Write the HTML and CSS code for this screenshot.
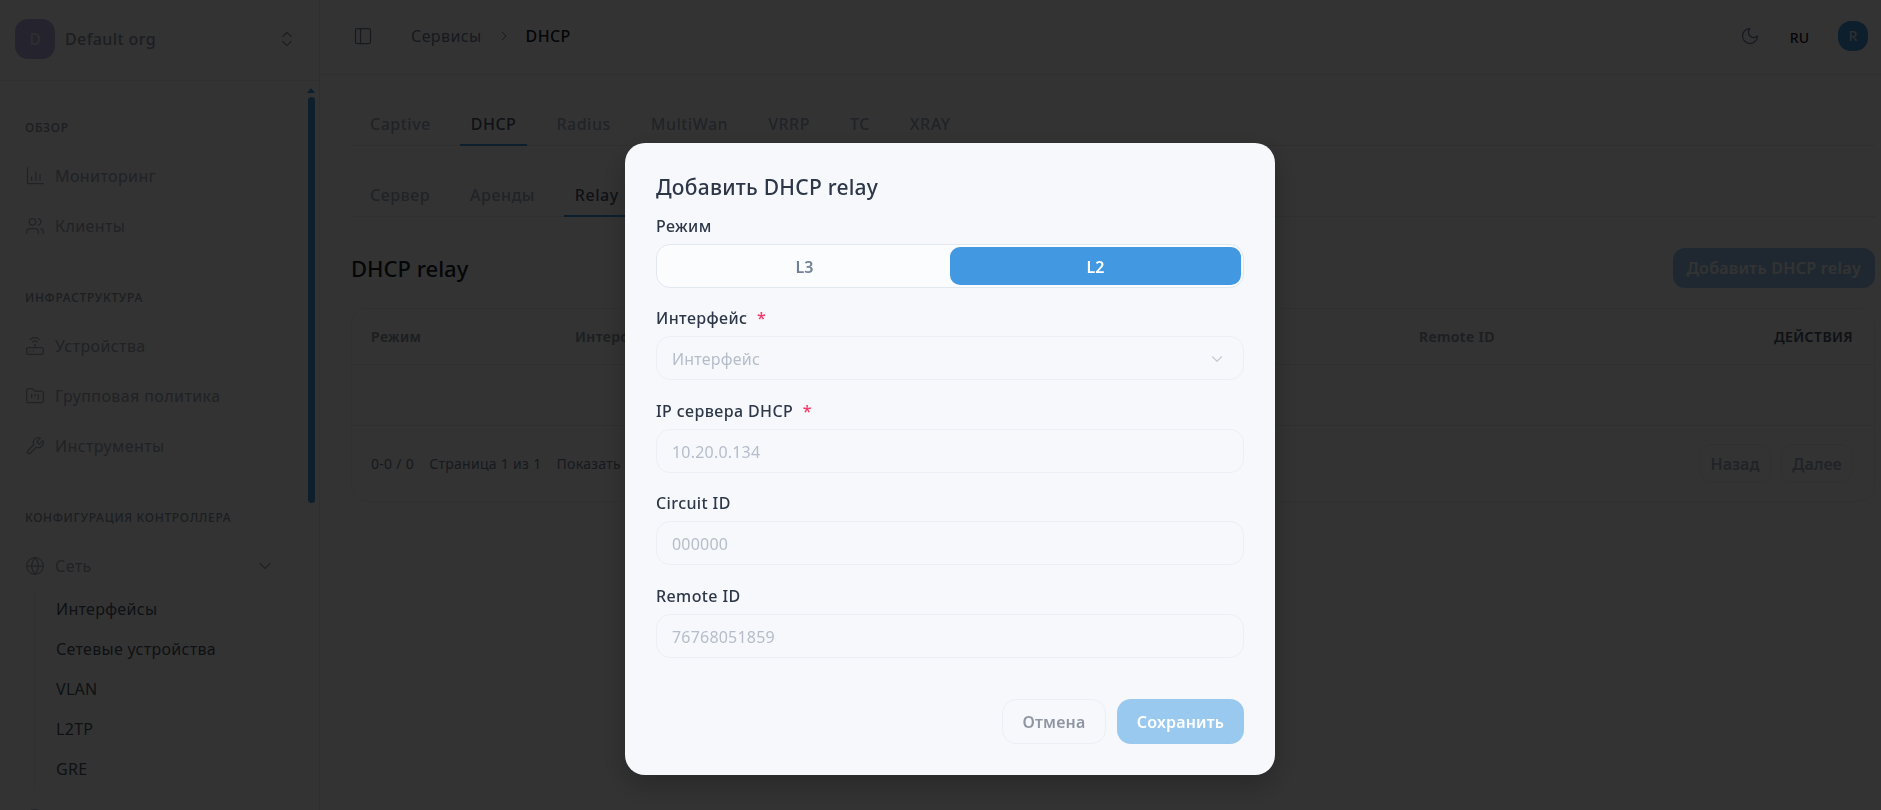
FILE: index.html
```html
<!DOCTYPE html>
<html lang="ru">
<head>
    <meta charset="UTF-8">
    <meta name="viewport" content="width=device-width, initial-scale=1.0">
    <title>DHCP</title>
    <link rel="stylesheet" href="styles.css">
</head>
<body>
    <div class="app">
        <aside class="sidebar">
            <div class="org">
                <div class="org-avatar">D</div>
                <span class="org-name">Default org</span>
                <svg class="icon org-switch" viewBox="0 0 24 24"><path d="m7 15 5 5 5-5"/><path d="m7 9 5-5 5 5"/></svg>
            </div>
            <nav class="nav">
                <div class="nav-label">Обзор</div>
                <a class="nav-item">
                    <svg class="icon" viewBox="0 0 24 24"><path d="M3 2v19h19"/><path d="M8 17v-4"/><path d="M13 17V7"/><path d="M18 17v-7"/></svg>
                    Мониторинг
                </a>
                <a class="nav-item">
                    <svg class="icon" viewBox="0 0 24 24"><path d="M16 21v-2a4 4 0 0 0-4-4H6a4 4 0 0 0-4 4v2"/><circle cx="9" cy="7" r="4"/><path d="M22 21v-2a4 4 0 0 0-3-3.87"/><path d="M16 3.13a4 4 0 0 1 0 7.75"/></svg>
                    Клиенты
                </a>

                <div class="nav-label">Инфраструктура</div>
                <a class="nav-item">
                    <svg class="icon" viewBox="0 0 24 24"><rect x="2" y="14" width="20" height="8" rx="2"/><path d="M6.01 18H6"/><path d="M10.01 18H10"/><path d="M12 14v-4"/><path d="M9.2 7.2a4 4 0 0 1 5.6 0"/><path d="M6.3 4.3a8 8 0 0 1 11.4 0"/></svg>
                    Устройства
                </a>
                <a class="nav-item">
                    <svg class="icon" viewBox="0 0 24 24"><path d="M20 20a2 2 0 0 0 2-2V8a2 2 0 0 0-2-2h-7.9a2 2 0 0 1-1.69-.9L9.6 3.9A2 2 0 0 0 7.93 3H4a2 2 0 0 0-2 2v13a2 2 0 0 0 2 2Z"/><path d="M8 10v4"/><path d="M12 10v2"/><path d="M16 10v6"/></svg>
                    Групповая политика
                </a>
                <a class="nav-item">
                    <svg class="icon" viewBox="0 0 24 24"><path d="M14.7 6.3a1 1 0 0 0 0 1.4l1.6 1.6a1 1 0 0 0 1.4 0l3.77-3.77a6 6 0 0 1-7.94 7.94l-6.91 6.91a2.12 2.12 0 0 1-3-3l6.91-6.91a6 6 0 0 1 7.94-7.94l-3.76 3.76z"/></svg>
                    Инструменты
                </a>

                <div class="nav-label">Конфигурация контроллера</div>
                <a class="nav-item">
                    <svg class="icon" viewBox="0 0 24 24"><circle cx="12" cy="12" r="10"/><path d="M2 12h20"/><path d="M12 2a15.3 15.3 0 0 1 4 10 15.3 15.3 0 0 1-4 10 15.3 15.3 0 0 1-4-10 15.3 15.3 0 0 1 4-10z"/></svg>
                    Сеть
                    <svg class="icon nav-caret" viewBox="0 0 24 24"><path d="m6 9 6 6 6-6"/></svg>
                </a>
                <div class="subnav">
                    <a class="subnav-item">Интерфейсы</a>
                    <a class="subnav-item">Сетевые устройства</a>
                    <a class="subnav-item">VLAN</a>
                    <a class="subnav-item">L2TP</a>
                    <a class="subnav-item">GRE</a>
                </div>
                <a class="nav-item">
                    <svg class="icon" viewBox="0 0 24 24"><circle cx="12" cy="12" r="10"/></svg>
                    Сервисы
                </a>
            </nav>
            <div class="scroll-arrow"></div>
            <div class="scroll-thumb"></div>
        </aside>

        <main class="main">
            <header class="topbar">
                <svg class="icon panel-icon" viewBox="0 0 24 24"><rect x="3" y="3" width="18" height="18" rx="2"/><path d="M9 3v18"/></svg>
                <span class="crumb">Сервисы</span>
                <svg class="icon crumb-sep" viewBox="0 0 24 24"><path d="m9 18 6-6-6-6"/></svg>
                <span class="crumb-current">DHCP</span>
                <div class="topbar-right">
                    <svg class="icon moon" viewBox="0 0 24 24"><path d="M12 3a6 6 0 0 0 9 9 9 9 0 1 1-9-9Z"/></svg>
                    <span class="lang">RU</span>
                    <div class="user-avatar">R</div>
                </div>
            </header>

            <div class="content">
                <div class="tabs tabs-top">
                    <span class="tab">Captive</span>
                    <span class="tab active">DHCP</span>
                    <span class="tab">Radius</span>
                    <span class="tab">MultiWan</span>
                    <span class="tab">VRRP</span>
                    <span class="tab">TC</span>
                    <span class="tab">XRAY</span>
                </div>
                <div class="tabs tabs-sub">
                    <span class="tab">Сервер</span>
                    <span class="tab">Аренды</span>
                    <span class="tab active">Relay</span>
                </div>

                <div class="page-head">
                    <h1>DHCP relay</h1>
                    <button class="add-btn">Добавить DHCP relay</button>
                </div>

                <div class="card">
                    <div class="table-row table-head">
                        <span>Режим</span>
                        <span>Интерфейс</span>
                        <span>IP сервера DHCP</span>
                        <span>Circuit ID</span>
                        <span>Remote ID</span>
                        <span class="actions-col">ДЕЙСТВИЯ</span>
                    </div>
                    <div class="table-empty"></div>
                    <div class="table-foot">
                        <span>0-0 / 0</span>
                        <span>Страница 1 из 1</span>
                        <span>Показать строк: 10</span>
                        <div class="pager">
                            <button class="pager-btn">Назад</button>
                            <button class="pager-btn">Далее</button>
                        </div>
                    </div>
                </div>
            </div>
        </main>
    </div>

    <!-- Modal sits on top of everything, page behind is dimmed -->
    <div class="overlay">
        <div class="modal">
            <h2>Добавить DHCP relay</h2>
            <div class="field-label first-label">Режим</div>
            <div class="segment">
                <span class="segment-item">L3</span>
                <span class="segment-item selected">L2</span>
            </div>
            <div class="fields">
                <div>
                    <label class="field-label">Интерфейс <span class="req">*</span></label>
                    <div class="input select">
                        Интерфейс
                        <svg class="icon" viewBox="0 0 24 24"><path d="m6 9 6 6 6-6"/></svg>
                    </div>
                </div>
                <div>
                    <label class="field-label">IP сервера DHCP <span class="req">*</span></label>
                    <input class="input" placeholder="10.20.0.134">
                </div>
                <div>
                    <label class="field-label">Circuit ID</label>
                    <input class="input" placeholder="000000">
                </div>
                <div>
                    <label class="field-label">Remote ID</label>
                    <input class="input" placeholder="76768051859">
                </div>
            </div>
            <div class="modal-foot">
                <button class="btn btn-cancel">Отмена</button>
                <button class="btn btn-save">Сохранить</button>
            </div>
        </div>
    </div>
</body>
</html>
```

FILE: styles.css
```css
* {
    box-sizing: border-box;
}

body {
    margin: 0;
    height: 100vh;
    overflow: hidden;
    background: #fff;
    color: #2d3748;
    font-family: "Noto Sans", sans-serif;
    font-size: 16px;
}

.icon {
    width: 20px;
    height: 20px;
    flex: none;
    fill: none;
    stroke: currentColor;
    stroke-width: 1.5;
    stroke-linecap: round;
    stroke-linejoin: round;
}

.app {
    display: flex;
    height: 100vh;
}

/* sidebar */
.sidebar {
    position: relative;
    width: 320px;
    flex: none;
    overflow: hidden;
    border-right: 1px solid #e8ebf0;
}

.org {
    display: flex;
    align-items: center;
    height: 81px;
    padding: 0 22px 2px 15px;
    border-bottom: 1px solid #e8ebf0;
}

.org-avatar {
    display: flex;
    justify-content: center;
    align-items: center;
    width: 40px;
    height: 40px;
    border-radius: 13px;
    background: #b4aee6;
    color: #e2e2ee;
    font-weight: 600;
}

.org-name {
    margin-left: 10px;
    color: #8a94a6;
    font-weight: 500;
    letter-spacing: .4px;
}

.org-switch {
    margin-left: auto;
    color: #8a94a6;
}

.nav {
    padding-top: 36px;
}

.nav-label {
    height: 20px;
    margin: 36px 0 14px 25px;
    color: #8a94a6;
    font-size: 12px;
    font-weight: 500;
    line-height: 22px;
    letter-spacing: .7px;
    text-transform: uppercase;
}

.nav-label:first-child {
    margin-top: 0;
}

.nav-item {
    display: flex;
    align-items: center;
    gap: 10px;
    height: 50px;
    padding: 0 25px;
    color: #a0a8b8;
    letter-spacing: .4px;
}

.nav-caret {
    margin-left: auto;
    margin-right: 19px;
}

.subnav {
    margin: -2px 0 4px 34px;
    padding-left: 21px;
    border-left: 1px solid #eef0f4;
}

.subnav-item {
    display: block;
    height: 40px;
    line-height: 40px;
    color: #4a5568;
    letter-spacing: .3px;
}

.scroll-arrow {
    position: absolute;
    top: 88px;
    left: 307px;
    border: 4px solid transparent;
    border-top: 0;
    border-bottom: 5px solid #4299e1;
}

.scroll-thumb {
    position: absolute;
    top: 97px;
    left: 308px;
    width: 7px;
    height: 406px;
    border-radius: 4px;
    background: #4299e1;
}

/* top bar */
.main {
    flex: 1;
    min-width: 0;
}

.topbar {
    display: flex;
    align-items: center;
    height: 75px;
    padding: 0 13px 3px 33px;
    border-bottom: 1px solid #e8ebf0;
}

.panel-icon {
    color: #718096;
}

.crumb {
    margin-left: 38px;
    color: #718096;
    letter-spacing: .4px;
}

.crumb-sep {
    width: 16px;
    height: 16px;
    margin: 0 14px;
    color: #718096;
}

.crumb-current {
    font-weight: 500;
    color: #1a202c;
    letter-spacing: .4px;
}

.topbar-right {
    display: flex;
    align-items: center;
    margin-left: auto;
}

.moon {
    color: #718096;
}

.lang {
    margin: 3px 29px 0 30px;
    font-size: 14px;
    font-weight: 500;
    color: #1a202c;
}

.user-avatar {
    display: flex;
    justify-content: center;
    align-items: center;
    width: 30px;
    height: 30px;
    border-radius: 13px;
    background: #4299e1;
    color: #e2e8f0;
    font-size: 14px;
    font-weight: 500;
}

/* content */
.content {
    padding: 0 6px 0 31px;
}

.tabs {
    display: flex;
    gap: 18px;
    height: 71px;
    padding: 29px 0 0 8px;
    border-bottom: 1px solid #e8ebf0;
}

.tab {
    height: 42px;
    padding: 9px 11px 0;
    border-bottom: 2px solid transparent;
    color: #a0aec0;
    font-weight: 500;
    line-height: 22px;
    letter-spacing: .5px;
}

.tab.active {
    border-bottom-color: #4299e1;
    color: #4a5568;
}

.page-head {
    display: flex;
    justify-content: space-between;
    align-items: center;
    margin-top: 31px;
    height: 40px;
}

.page-head h1 {
    margin: 0;
    font-size: 22px;
    font-weight: 500;
    color: #1a202c;
}

.add-btn {
    height: 40px;
    padding: 0 14px;
    border: 0;
    border-radius: 12px;
    background: #9ac9f0;
    color: #fff;
    font: 600 16px "Noto Sans", sans-serif;
    letter-spacing: .3px;
}

.card {
    margin-top: 20px;
    border: 1px solid #edf0f4;
    border-radius: 16px;
    overflow: hidden;
}

.table-row {
    display: grid;
    grid-template-columns: 204px 422px 211px 211px 1fr auto;
    align-items: center;
    padding: 0 21px 0 19px;
}

.table-head {
    height: 56px;
    background: #f8fcf8;
    border-bottom: 1px solid #e8ebf0;
    color: #8a94a6;
    font-size: 14px;
    font-weight: 600;
    letter-spacing: .4px;
}

.actions-col {
    color: #4a5568;
}

.table-empty {
    height: 61px;
    border-bottom: 1px solid #e8ebf0;
}

.table-foot {
    display: flex;
    align-items: center;
    gap: 15px;
    height: 75px;
    padding: 0 21px 0 19px;
    color: #718096;
    font-size: 14px;
    letter-spacing: .3px;
}

.pager {
    display: flex;
    gap: 10px;
    margin-left: auto;
}

.pager-btn {
    width: 72px;
    height: 39px;
    border: 1px solid #eef0f4;
    border-radius: 12px;
    background: transparent;
    color: #a0aec0;
    font: 600 16px "Noto Sans", sans-serif;
}

/* modal */
.overlay {
    position: fixed;
    inset: 0;
    padding: 143px 0 0 625px;
    background: rgba(0, 0, 0, .8);
}

.modal {
    width: 650px;
    height: 632px;
    padding: 30px 31px;
    border-radius: 20px;
    background: #f6f8fc;
    box-shadow: 0 10px 30px rgba(0, 0, 0, .25);
}

.modal h2 {
    margin: 0 0 14px;
    font-size: 21px;
    font-weight: 500;
    line-height: 28px;
    letter-spacing: .25px;
    color: #2d3748;
}

.field-label {
    display: block;
    margin-bottom: 7px;
    font-size: 16px;
    font-weight: 500;
    line-height: 22px;
    letter-spacing: .4px;
    color: #2d3748;
}

.req {
    margin-left: 5px;
    color: #f5386a;
}

.segment {
    display: flex;
    height: 44px;
    padding: 2px;
    border: 1px solid #e2e8f0;
    border-radius: 14px;
    background: #fbfcfe;
}

.segment-item {
    flex: 1;
    display: flex;
    justify-content: center;
    align-items: center;
    padding-top: 1px;
    border-radius: 10px;
    color: #718096;
    font-weight: 600;
}

.segment-item.selected {
    background: #4299e1;
    color: #fff;
}

.fields {
    display: flex;
    flex-direction: column;
    gap: 19.7px;
    margin-top: 19px;
}

.input {
    display: block;
    width: 100%;
    height: 44px;
    padding: 2px 15px 0;
    border: 1px solid #eceff5;
    border-radius: 14px;
    outline: none;
    background: transparent;
    color: #b6bdca;
    font: 400 16px "Noto Sans", sans-serif;
    letter-spacing: .2px;
}

.input::placeholder {
    color: #b6bdca;
    opacity: 1;
}

.select {
    display: flex;
    justify-content: space-between;
    align-items: center;
}

.select .icon {
    width: 18px;
    height: 18px;
    margin-right: 2px;
    color: #c3c9d4;
}

.modal-foot {
    display: flex;
    justify-content: flex-end;
    gap: 11px;
    margin-top: 41px;
}

.btn {
    height: 45px;
    border-radius: 14px;
    font: 600 16px "Noto Sans", sans-serif;
    letter-spacing: .2px;
}

.btn-cancel {
    width: 104px;
    border: 1px solid #eceff5;
    background: transparent;
    color: #8f96a3;
}

.btn-save {
    width: 127px;
    border: 0;
    background: #9ac9f0;
    color: #fff;
}
```
